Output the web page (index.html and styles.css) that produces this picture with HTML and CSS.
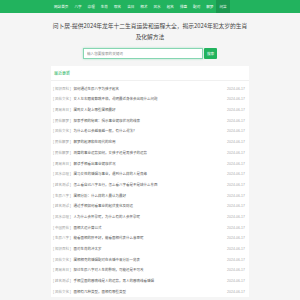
FILE: index.html
```html
<!DOCTYPE html>
<html lang="zh-CN">
<head>
  <meta charset="UTF-8" />
  <meta name="viewport" content="width=device-width, initial-scale=1.0"/>
  <title>问卜居</title>
  <link rel="stylesheet" href="styles.css">
</head>
<body>

  <div class="topbar">
    <ul class="nav">
      <li><a href="#">网站首页</a></li>
      <li><a href="#">八字</a></li>
      <li><a href="#">命理</a></li>
      <li><a href="#">生肖</a></li>
      <li><a href="#">取名</a></li>
      <li><a href="#">吉日</a></li>
      <li><a href="#">相术</a></li>
      <li><a href="#">风水</a></li>
      <li><a href="#">起名</a></li>
      <li><a href="#">排盘</a></li>
      <li><a href="#">配对</a></li>
      <li><a href="#">解梦</a></li>
      <li class="on"><a href="#">问答</a></li>
    </ul>
  </div>

  <div class="cabecera">
    <h1>问卜居-提供2024年龙年十二生肖运势和运程大全，揭示2024年犯太岁的生肖及化解方法</h1>
    <form class="buscar" onsubmit="return false">
      <input type="text" placeholder="输入您要搜索的关键词"/>
      <button type="submit">搜索</button>
    </form>
  </div>

  <div class="caja">
    <div class="caja-titulo">最近更新</div>
    <ul class="lista">
      <li><span class="cat">[ 知识百科 ]</span><a href="#">如何通过生辰八字为孩子起名</a><span class="fecha">2024-06-17</span></li>
      <li><span class="cat">[ 风俗文化 ]</span><a href="#">女人左右眼皮都跳不停，说明最近身体会出现什么问题</a><span class="fecha">2024-06-17</span></li>
      <li><span class="cat">[ 周易吉日 ]</span><a href="#">属鸡女人配上哪些属相最好</a><span class="fecha">2024-06-17</span></li>
      <li><span class="cat">[ 民俗解梦 ]</span><a href="#">探索手相的秘密：揭示事业健康状况的线索</a><span class="fecha">2024-06-17</span></li>
      <li><span class="cat">[ 风俗文化 ]</span><a href="#">为什么老公会越来越一般，有什么说法？</a><span class="fecha">2024-06-17</span></li>
      <li><span class="cat">[ 民俗解梦 ]</span><a href="#">解梦的起源和在现代的应用</a><span class="fecha">2024-06-17</span></li>
      <li><span class="cat">[ 民俗解梦 ]</span><a href="#">测算的事业运势如何，女孩子还是男孩子的运势</a><span class="fecha">2024-06-17</span></li>
      <li><span class="cat">[ 周易吉日 ]</span><a href="#">解读手相看出事业健康状况</a><span class="fecha">2024-06-17</span></li>
      <li><span class="cat">[ 风水命理 ]</span><a href="#">属马女性的婚姻与事业，遇到什么样的人是良缘</a><span class="fecha">2024-06-17</span></li>
      <li><span class="cat">[ 姓名测试 ]</span><a href="#">怎么看自己八字五行，怎么看八字看是不是缺什么东西</a><span class="fecha">2024-06-17</span></li>
      <li><span class="cat">[ 生辰八字 ]</span><a href="#">属相分析：什么样的人最认为最好</a><span class="fecha">2024-06-17</span></li>
      <li><span class="cat">[ 姓名测试 ]</span><a href="#">通过手相如何看事业的起伏变化及财运</a><span class="fecha">2024-06-17</span></li>
      <li><span class="cat">[ 风水命理 ]</span><a href="#">人为什么会怀孕呢，为什么有的人会怀孕呢</a><span class="fecha">2024-06-17</span></li>
      <li><span class="cat">[ 中国民俗 ]</span><a href="#">面相大运计算公式</a><span class="fecha">2024-06-17</span></li>
      <li><span class="cat">[ 生辰八字 ]</span><a href="#">能看面相的肝不好，能看面相代表什么意思呢</a><span class="fecha">2024-06-17</span></li>
      <li><span class="cat">[ 知识百科 ]</span><a href="#">面对生肖的冲太岁</a><span class="fecha">2024-06-17</span></li>
      <li><span class="cat">[ 风俗文化 ]</span><a href="#">属相相克的婚姻配对在合婚中来分析一览表</a><span class="fecha">2024-06-17</span></li>
      <li><span class="cat">[ 周易吉日 ]</span><a href="#">探讨生辰八字对人生的影响，可能还是不可改</a><span class="fecha">2024-06-17</span></li>
      <li><span class="cat">[ 姓名测试 ]</span><a href="#">手相里面的感情线是人的运势，男人的感情线看婚姻</a><span class="fecha">2024-06-17</span></li>
      <li><span class="cat">[ 风俗文化 ]</span><a href="#">面相有几种类型，面相有哪些类型</a><span class="fecha">2024-06-17</span></li>
    </ul>
  </div>

</body>
</html>
```

FILE: styles.css
```css
body {
  margin: 0;
  padding: 0;
  background: #f5f5f5;
  font-family: "Noto Sans CJK SC", "Noto Sans", sans-serif;
  color: #555;
}

a {
  color: inherit;
  text-decoration: none;
}

.topbar {
  background: #22b35e;
  height: 13px;
}

.nav {
  list-style: none;
  margin: 0 auto;
  padding: 0;
  width: 198px;
  display: flex;
  height: 13px;
}

.nav li a {
  display: block;
  padding: 0 3px;
  line-height: 13px;
  font-size: 3.6px;
  color: #fff;
}

.nav li.on a {
  background: #1b9850;
}

.cabecera {
  width: 200px;
  margin: 0 auto;
  padding-top: 6.5px;
}

h1 {
  margin: 0;
  font-size: 5.75px;
  line-height: 11px;
  font-weight: normal;
  color: #444;
  text-align: center;
}

.buscar {
  display: flex;
  justify-content: center;
  margin-top: 6px;
  gap: 1px;
}

.buscar input {
  box-sizing: border-box;
  width: 120px;
  height: 11px;
  padding: 0 3px;
  border: 1px solid #86d6b2;
  box-shadow: 0 0 2px #a9e3c8;
  outline: none;
  font-family: inherit;
  font-size: 3.6px;
  color: #666;
  background: #fff;
}

.buscar input::placeholder {
  color: #888;
}

.buscar button {
  width: 13px;
  height: 11px;
  padding: 0;
  border: none;
  border-radius: 1px;
  background: #22b35e;
  color: #fff;
  font-family: inherit;
  font-size: 3.6px;
}

.caja {
  width: 198px;
  margin: 7px auto 0;
  background: #fff;
}

.caja-titulo {
  height: 14px;
  line-height: 14px;
  padding-left: 3px;
  font-size: 4px;
  color: #22b35e;
  border-bottom: 1px solid #f0f0f0;
}

.lista {
  list-style: none;
  margin: 0;
  padding: 3.2px 4px 0 2px;
}

.lista li {
  display: flex;
  height: 10.7px;
  line-height: 10.7px;
  font-size: 3.5px;
  white-space: nowrap;
}

.cat {
  color: #999;
  margin-right: 2.5px;
}

.lista li a {
  flex: 1;
  color: #555;
  overflow: hidden;
}

.fecha {
  color: #aaa;
  font-family: "Liberation Sans", sans-serif;
  margin-left: 4px;
}
```
